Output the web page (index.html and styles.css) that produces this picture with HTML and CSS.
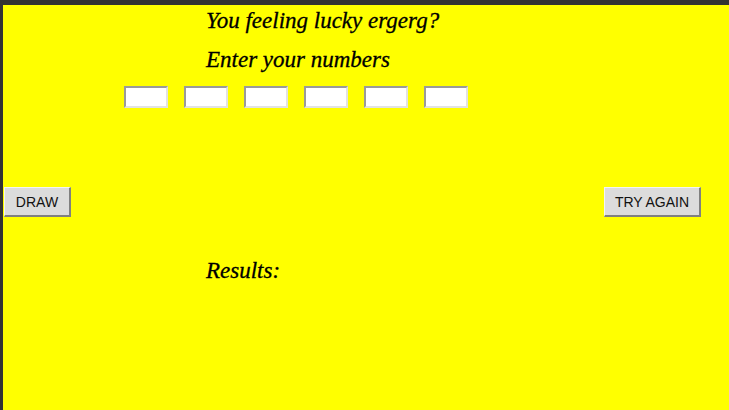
FILE: index.html
```html
<!DOCTYPE html>
<html>
<head>
<meta charset="utf-8">
<link rel="stylesheet" href="styles.css">
</head>
<body>
<div class="page">
  <h1 class="title">You feeling lucky ergerg?</h1>
  <h2 class="prompt">Enter your numbers</h2>
  <div class="inputs">
    <input class="num" type="text">
    <input class="num" type="text">
    <input class="num" type="text">
    <input class="num" type="text">
    <input class="num" type="text">
    <input class="num" type="text">
  </div>
  <div class="actions">
    <button class="btn btn-draw">DRAW</button>
    <button class="btn btn-again">TRY AGAIN</button>
  </div>
  <h2 class="results">Results:</h2>
</div>
</body>
</html>
```
FILE: styles.css
```css
html {
  background: #333333;
  height: 100%;
}
body {
  margin: 0;
  padding: 5px 0 0 3px;
  height: 100%;
  box-sizing: border-box;
  overflow: hidden;
}
.page {
  background: #ffff00;
  height: 100%;
  display: flex;
  flex-direction: column;
}
.title, .prompt, .results {
  font-family: "Liberation Serif", serif;
  font-style: italic;
  font-weight: normal;
  font-size: 23px;
  line-height: 28px;
  margin: 0;
  padding-left: 203px;
  color: #000;
  -webkit-text-stroke: 0.3px #000;
}
.title { margin-top: 2px; }
.prompt { margin-top: 11px; }
.inputs {
  display: flex;
  gap: 16px;
  padding-left: 121px;
  margin-top: 12px;
}
.num {
  flex: 0 0 44px;
  width: 44px;
  height: 22px;
  box-sizing: border-box;
  margin: 0;
  padding: 0;
  border-style: solid;
  border-width: 2px;
  border-color: #9a9a9a #e2e2e2 #e2e2e2 #9a9a9a;
  background: #fff;
}
.actions {
  display: flex;
  justify-content: space-between;
  padding: 0 28px 0 1px;
  margin-top: 79px;
}
.btn {
  font-family: "Liberation Sans", Arial, sans-serif;
  font-size: 14px;
  color: #111;
  background: #dcdcdc;
  border-style: solid;
  border-width: 1px 2px 2px 1px;
  border-color: #f4f4f4 #808080 #808080 #f4f4f4;
  height: 30px;
  padding: 0;
  margin: 0;
  text-align: center;
}
.btn-draw { width: 67px; }
.btn-again { width: 97px; }
.results { margin-top: 40px; }
```
